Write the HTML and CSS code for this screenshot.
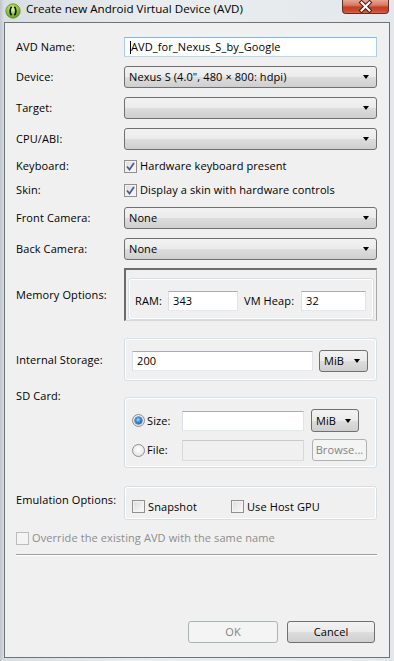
FILE: index.html
```html
<!DOCTYPE html>
<html>
<head>
    <title>Create new Android Virtual Device (AVD)</title>
    <link rel="stylesheet" href="styles.css">
</head>
<body>

    <div class="window">
        <div class="titlebar">
            <svg class="app-icon" viewBox="0 0 16 16">
                <defs>
                    <radialGradient id="ball" cx="45%" cy="35%" r="65%">
                        <stop offset="0" stop-color="#e4f7a8"/>
                        <stop offset="0.45" stop-color="#9fd24a"/>
                        <stop offset="1" stop-color="#5c9a1e"/>
                    </radialGradient>
                </defs>
                <circle cx="8" cy="8" r="7.2" fill="url(#ball)" stroke="#6a8a35" stroke-width="0.8"/>
                <path d="M6.6 3.8 C4.6 6 4.6 10 6.6 12.2" fill="none" stroke="#111" stroke-width="1.7"/>
                <path d="M9.4 3.8 C11.4 6 11.4 10 9.4 12.2" fill="none" stroke="#111" stroke-width="1.7"/>
            </svg>
            <span class="title">Create new Android Virtual Device (AVD)</span>
            <div class="close-btn">
                <svg viewBox="0 0 47 14" width="47" height="14">
                    <path d="M19.5 2.5 L27.5 10.5 M27.5 2.5 L19.5 10.5" stroke="#4a1a12" stroke-width="4" stroke-linecap="square"/>
                    <path d="M19.5 2.5 L27.5 10.5 M27.5 2.5 L19.5 10.5" stroke="#fff" stroke-width="2" stroke-linecap="square"/>
                </svg>
            </div>
        </div>

        <div class="client">
            <div class="row">
                <div class="lbl">AVD Name:</div>
                <div class="ctrl textbox focus"><span class="caret"></span>AVD_for_Nexus_S_by_Google</div>
            </div>
            <div class="row gap9">
                <div class="lbl">Device:</div>
                <div class="ctrl combo">Nexus S (4.0", 480 × 800: hdpi)</div>
            </div>
            <div class="row gap9">
                <div class="lbl">Target:</div>
                <div class="ctrl combo"></div>
            </div>
            <div class="row gap9">
                <div class="lbl">CPU/ABI:</div>
                <div class="ctrl combo"></div>
            </div>
            <div class="row gap8 line">
                <div class="lbl">Keyboard:</div>
                <div class="check-item">
                    <span class="checkbox"><svg viewBox="0 0 11 11"><path d="M2 5.5 L4.5 8.5 L9 2" fill="none" stroke="#4a5d8e" stroke-width="1.8"/></svg></span>
                    Hardware keyboard present
                </div>
            </div>
            <div class="row gap8 line">
                <div class="lbl">Skin:</div>
                <div class="check-item">
                    <span class="checkbox"><svg viewBox="0 0 11 11"><path d="M2 5.5 L4.5 8.5 L9 2" fill="none" stroke="#4a5d8e" stroke-width="1.8"/></svg></span>
                    Display a skin with hardware controls
                </div>
            </div>
            <div class="row gap9">
                <div class="lbl">Front Camera:</div>
                <div class="ctrl combo">None</div>
            </div>
            <div class="row gap9">
                <div class="lbl">Back Camera:</div>
                <div class="ctrl combo">None</div>
            </div>

            <div class="row gap8">
                <div class="lbl">Memory Options:</div>
                <div class="ctrl sunken">
                    <div class="group memory">
                        <span class="ram-lbl">RAM:</span>
                        <div class="textbox ram">343</div>
                        <span class="heap-lbl">VM Heap:</span>
                        <div class="textbox heap">32</div>
                    </div>
                </div>
            </div>

            <div class="row gap17">
                <div class="lbl">Internal Storage:</div>
                <div class="ctrl group storage">
                    <div class="textbox storage-input">200</div>
                    <div class="combo unit">MiB</div>
                </div>
            </div>

            <div class="row gap7 top">
                <div class="lbl">SD Card:</div>
                <div class="ctrl group sdcard">
                    <div class="sd-line">
                        <span class="radio on"><span class="dot"></span></span>
                        <span class="radio-lbl">Size:</span>
                        <div class="textbox sd-input">&nbsp;</div>
                        <div class="combo sd-unit">MiB</div>
                    </div>
                    <div class="sd-line">
                        <span class="radio"></span>
                        <span class="radio-lbl">File:</span>
                        <div class="textbox sd-input disabled">&nbsp;</div>
                        <div class="btn disabled browse">Browse...</div>
                    </div>
                </div>
            </div>

            <div class="row gap18">
                <div class="lbl emu-lbl">Emulation Options:</div>
                <div class="ctrl group emulation">
                    <div class="check-item snapshot"><span class="checkbox"></span>Snapshot</div>
                    <div class="check-item"><span class="checkbox"></span>Use Host GPU</div>
                </div>
            </div>

            <div class="row gap10 line">
                <div class="check-item muted"><span class="checkbox off"></span>Override the existing AVD with the same name</div>
            </div>

            <div class="separator"></div>

            <div class="buttons">
                <div class="btn disabled ok">OK</div>
                <div class="btn cancel">Cancel</div>
            </div>
        </div>
    </div>

</body>
</html>
```

FILE: styles.css
```css
body {
    margin: 0;
    font-family: "Open Sans", "Noto Sans", sans-serif;
    font-size: 11px;
    letter-spacing: 0.1px;
    color: #000;
    background: #e6eaed;
}
.window {
    width: 394px;
    height: 661px;
    display: flex;
    flex-direction: column;
    background: linear-gradient(90deg, #bfc5ca 0, #d9dee2 4px, #e9edf0 40%, #e3e8ec 100%);
}
.titlebar {
    height: 22px;
    display: flex;
    align-items: flex-start;
    padding: 0 5px;
}
.app-icon {
    width: 16px;
    height: 16px;
    margin-top: 3px;
    flex: none;
}
.title {
    margin-left: 5px;
    margin-top: 1px;
    font-size: 11.6px;
    letter-spacing: 0;
    line-height: 16px;
}
.close-btn {
    margin-left: auto;
    width: 47px;
    height: 14px;
    box-sizing: border-box;
    border: 1px solid #6b2b20;
    border-top: none;
    border-radius: 0 0 4px 4px;
    background: linear-gradient(#e7a595 0, #d87a63 40%, #c23f24 55%, #c84c31 85%, #d86a4c 100%);
    overflow: hidden;
}
.close-btn svg {
    display: block;
    margin-left: -1px;
}
.client {
    margin: 0 4px 3px 4px;
    height: 636px;
    box-sizing: border-box;
    border: 1px solid #6e7378;
    background: #f0f0f0;
    display: flex;
    flex-direction: column;
    padding: 14px 12px 14px 11px;
    line-height: 16px;
}
.row {
    display: flex;
    align-items: center;
}
.row.top {
    align-items: flex-start;
}
.row.line {
    height: 16px;
}
.gap7 { margin-top: 7px; }
.gap8 { margin-top: 8px; }
.gap9 { margin-top: 9px; }
.gap10 { margin-top: 10px; }
.gap17 { margin-top: 17px; }
.gap18 { margin-top: 18px; }
.lbl {
    width: 108px;
    flex: none;
}
.emu-lbl {
    margin-bottom: 6px;
}
.ctrl {
    width: 253px;
    flex: none;
    box-sizing: border-box;
}
.textbox {
    height: 20px;
    box-sizing: border-box;
    border: 1px solid;
    border-color: #abadb3 #e2e3ea #e3e9ef #dbdfe6;
    background: #fff;
    padding: 0 4px;
    display: flex;
    align-items: center;
    white-space: nowrap;
}
.textbox.focus {
    border-color: #80b4e6 #a9cdeb #b7d9ed #a9cdeb;
    padding-left: 5px;
}
.caret {
    width: 1px;
    height: 13px;
    background: #000;
}
.textbox.disabled {
    background: #f0f0f0;
    border-color: #c8c9ca #d9d9d9 #dedede #d9d9d9;
}
.combo {
    height: 22px;
    box-sizing: border-box;
    border: 1px solid #707070;
    border-radius: 3px;
    background: linear-gradient(#f2f2f2 0, #ebebeb 50%, #dddddd 50%, #cfcfcf 100%);
    display: flex;
    align-items: center;
    padding: 0 7px 0 4px;
    white-space: nowrap;
}
.combo::after {
    content: "";
    margin-left: auto;
    border-left: 3px solid transparent;
    border-right: 3px solid transparent;
    border-top: 4px solid #000;
}
.check-item {
    display: flex;
    align-items: center;
    white-space: nowrap;
}
.checkbox {
    width: 13px;
    height: 13px;
    box-sizing: border-box;
    border: 1px solid #8e8f8f;
    background: linear-gradient(135deg, #dcdcdc, #fbfbfb);
    box-shadow: inset 0 0 0 1px #f4f4f4;
    margin-right: 3px;
    flex: none;
}
.checkbox svg {
    display: block;
    width: 11px;
    height: 11px;
}
.checkbox.off {
    border-color: #bcbcbc;
    background: #f4f4f4;
}
.muted {
    color: #8d8d8d;
}
.group {
    border: 1px solid #d5dfe5;
    border-radius: 3px;
    box-shadow: inset 0 0 0 1px #fff;
    box-sizing: border-box;
}
.sunken {
    border-top: 2px solid #6c6c6c;
    border-left: 2px solid #6c6c6c;
    border-right: 1px solid #a8a8a8;
    border-bottom: 1px solid #d8d8d8;
    padding: 8px 2px 0 2px;
}
.memory {
    display: flex;
    align-items: center;
    padding: 12px 6px 8px 6px;
}
.ram-lbl {
    width: 33px;
}
.ram {
    width: 70px;
    margin-right: 6px;
}
.heap-lbl {
    width: 57px;
}
.heap {
    width: 65px;
}
.storage {
    display: flex;
    align-items: center;
    padding: 11px 7px 8px 7px;
}
.storage-input {
    width: 181px;
    margin-right: 6px;
}
.unit {
    width: 49px;
}
.sdcard {
    margin-top: 9px;
    padding: 11px 7px 6px 7px;
    display: flex;
    flex-direction: column;
    gap: 7px;
}
.sd-line {
    display: flex;
    align-items: center;
}
.radio {
    width: 13px;
    height: 13px;
    box-sizing: border-box;
    border-radius: 50%;
    border: 1px solid #8c8e90;
    background: radial-gradient(circle at 50% 40%, #ffffff, #dcdcdc);
    flex: none;
    display: flex;
    align-items: center;
    justify-content: center;
}
.radio .dot {
    width: 7px;
    height: 7px;
    border-radius: 50%;
    background: radial-gradient(circle at 45% 40%, #9fe0ff 0, #2d8ad6 45%, #0f3f7c 100%);
    box-shadow: 0 0 0 0.5px #1d4a7a;
}
.radio-lbl {
    width: 35px;
    padding-left: 2px;
}
.sd-input {
    width: 122px;
    height: 20px;
}
.sd-line .disabled.sd-input {
    height: 21px;
}
.sd-unit {
    width: 48px;
    height: 23px;
    margin-left: 7px;
}
.btn {
    height: 22px;
    box-sizing: border-box;
    border: 1px solid #707070;
    border-radius: 3px;
    background: linear-gradient(#f2f2f2 0, #ebebeb 50%, #dddddd 50%, #cfcfcf 100%);
    display: flex;
    align-items: center;
    justify-content: center;
}
.btn.disabled {
    border-color: #adb2b5;
    background: #f4f4f4;
    color: #838383;
}
.browse {
    width: 55px;
    margin-left: 8px;
}
.emulation {
    display: flex;
    align-items: center;
    padding: 13px 7px 6px 7px;
    height: 34px;
}
.snapshot {
    width: 99px;
}
.separator {
    margin-top: 8px;
    border-top: 1px solid #a0a0a0;
    border-bottom: 1px solid #fff;
}
.buttons {
    margin-top: auto;
    display: flex;
    justify-content: flex-end;
    gap: 9px;
    padding-right: 2px;
}
.ok {
    width: 90px;
}
.cancel {
    width: 88px;
}
```
